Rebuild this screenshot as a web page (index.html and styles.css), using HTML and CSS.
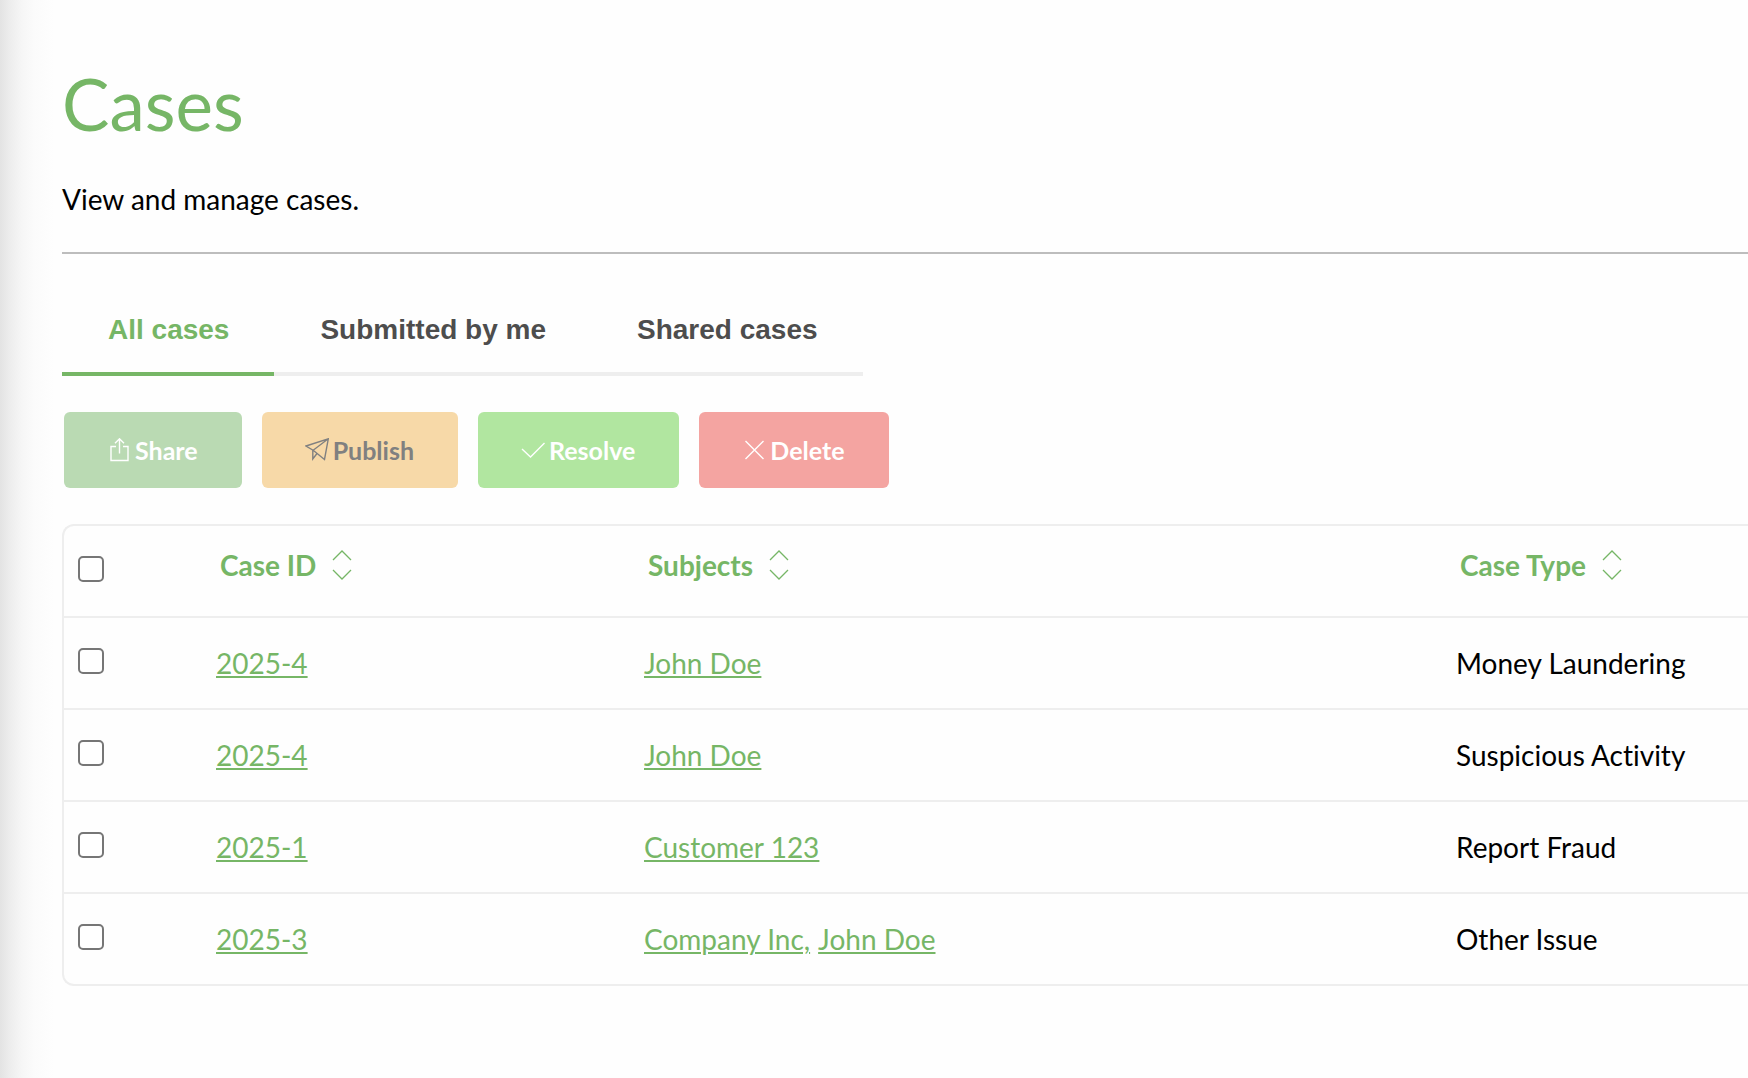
FILE: index.html
```html
<!DOCTYPE html>
<html lang="en">
<head>
<meta charset="utf-8">
<meta name="viewport" content="width=device-width, initial-scale=1">
<title>Cases</title>
<link rel="stylesheet" href="styles.css">
</head>
<body>
<svg class="sprite" aria-hidden="true">
  <symbol id="sort" viewBox="0 0 20 30"><path d="M1 10 10 1l9 9M1 20l9 9 9-9"/></symbol>
</svg>
<main class="page">
  <header class="page-header">
    <h1 class="title">Cases</h1>
    <p class="lead">View and manage cases.</p>
  </header>

  <nav class="tabs" aria-label="Case lists">
    <a class="tab tab-active" href="#all" aria-current="page">All cases</a>
    <a class="tab" href="#submitted">Submitted by me</a>
    <a class="tab" href="#shared">Shared cases</a>
  </nav>

  <div class="actions">
    <button class="btn btn-share" type="button" disabled>
      <svg class="icon" viewBox="0 0 24 24" aria-hidden="true"><path d="M9 8.500H4V22.500h17V8.500H16M12.500 15.500V1M8 5.300 12.500.8 17 5.300"/></svg>
      Share
    </button>
    <button class="btn btn-publish" type="button" disabled>
      <svg class="icon" viewBox="0 0 24 24" aria-hidden="true"><path d="M1 8 23.300.8 19.500 21.500 8.500 12.500ZM23.300.8 7.800 12.500v8.500l4.200-5.500"/></svg>
      Publish
    </button>
    <button class="btn btn-resolve" type="button" disabled>
      <svg class="icon" viewBox="0 0 24 24" aria-hidden="true"><path d="M1 11l8.500 8L23.500 5"/></svg>
      Resolve
    </button>
    <button class="btn btn-delete" type="button" disabled>
      <svg class="icon" viewBox="0 0 24 24" aria-hidden="true"><path d="M3.500 3l18 18M21.500 3l-18 18"/></svg>
      Delete
    </button>
  </div>

  <div class="table-wrap">
    <table class="cases">
      <colgroup><col class="col-check"><col class="col-id"><col><col class="col-type"></colgroup>
      <thead>
        <tr>
          <th class="check"><input type="checkbox" aria-label="Select all cases"></th>
          <th scope="col"><button class="sort" type="button">Case ID<svg class="sort-icon" aria-hidden="true"><use href="#sort"/></svg></button></th>
          <th scope="col"><button class="sort" type="button">Subjects<svg class="sort-icon" aria-hidden="true"><use href="#sort"/></svg></button></th>
          <th scope="col"><button class="sort" type="button">Case Type<svg class="sort-icon" aria-hidden="true"><use href="#sort"/></svg></button></th>
        </tr>
      </thead>
      <tbody>
        <tr>
          <td class="check"><input type="checkbox" aria-label="Select case 2025-4, Money Laundering"></td>
          <td><a href="#case">2025-4</a></td>
          <td><a href="#subject">John Doe</a></td>
          <td>Money Laundering</td>
        </tr>
        <tr>
          <td class="check"><input type="checkbox" aria-label="Select case 2025-4, Suspicious Activity"></td>
          <td><a href="#case">2025-4</a></td>
          <td><a href="#subject">John Doe</a></td>
          <td>Suspicious Activity</td>
        </tr>
        <tr>
          <td class="check"><input type="checkbox" aria-label="Select case 2025-1"></td>
          <td><a href="#case">2025-1</a></td>
          <td><a href="#subject">Customer 123</a></td>
          <td>Report Fraud</td>
        </tr>
        <tr>
          <td class="check"><input type="checkbox" aria-label="Select case 2025-3"></td>
          <td><a href="#case">2025-3</a></td>
          <td><div class="subjects"><a href="#subject">Company Inc,</a><a href="#subject">John Doe</a></div></td>
          <td>Other Issue</td>
        </tr>
      </tbody>
    </table>
  </div>
</main>
</body>
</html>
```
FILE: styles.css
```css
:root {
  --green: #76b666;
  --line: #eee;
}

* { box-sizing: border-box; }

body {
  margin: 0;
  min-height: 100vh;
  background: linear-gradient(to right, #e3e3e3 0, #ededed 10px, #f6f6f6 22px, #fbfbfb 34px, #fefefe 54px);
  color: #000;
  font: 28px/40px Lato, sans-serif;
  font-variant-ligatures: none;
}

.sprite { display: none; }

.page { padding: 62px 0 62px 62px; }

.page-header {
  padding-bottom: 33px;
  border-bottom: 2px solid #bdbdbd;
}

.title {
  margin: 0;
  color: var(--green);
  font-size: 71px;
  font-weight: 400;
  line-height: 84px;
}

.lead { margin: 33px 0 0; }

.tabs {
  display: flex;
  width: fit-content;
  margin-top: 30px;
  font-family: "Liberation Sans", Arial, sans-serif;
  font-weight: 700;
}

.tab {
  padding: 26px 45px 22px 46px;
  border-bottom: 4px solid var(--line);
  color: #4d4d4d;
  line-height: 40px;
  text-decoration: none;
}

.tab-active {
  border-color: var(--green);
  color: var(--green);
}

.actions {
  display: flex;
  gap: 20px;
  margin: 36px 2px;
}

.btn {
  display: flex;
  align-items: center;
  gap: 4px;
  height: 76px;
  padding: 0 44px 0 43px;
  border: 0;
  border-radius: 6px;
  color: #fff;
  font: 700 25px/32px Lato, sans-serif;
}

.btn-share { background: #badab3; }
.btn-publish { background: #f7d9a8; color: #808080; }
.btn-resolve { background: #b1e6a0; }
.btn-delete { background: #f4a4a1; }

.icon {
  width: 24px;
  height: 24px;
  fill: none;
  stroke: currentColor;
  stroke-width: 1.4;
}

.table-wrap {
  border: 2px solid var(--line);
  border-right: 0;
  border-radius: 12px 0 0 12px;
}

.cases {
  width: 100%;
  table-layout: fixed;
  border-collapse: separate;
  border-spacing: 0;
}

.col-check { width: 136px; }
.col-id { width: 428px; }
.col-type { width: 308px; }

.cases th,
.cases td {
  height: 92px;
  padding: 0 16px;
  border-bottom: 2px solid var(--line);
  text-align: left;
  white-space: nowrap;
}

.cases tbody tr:last-child td {
  height: 90px;
  border-bottom: 0;
}

.cases th { padding: 0 20px 12px; }

.cases th.check,
.cases td.check { padding: 0 14px 4px; }

.cases a {
  color: var(--green);
  text-underline-offset: 2px;
  text-decoration-thickness: 2px;
}

.cases input {
  appearance: none;
  display: block;
  width: 26px;
  height: 26px;
  margin: 0;
  border: 2px solid #767676;
  border-radius: 5px;
  background: #fff;
}

.sort {
  display: flex;
  align-items: center;
  gap: 16px;
  padding: 0;
  border: 0;
  background: none;
  color: var(--green);
  font: inherit;
  font-weight: 700;
}

.sort-icon {
  width: 20px;
  height: 30px;
  fill: none;
  stroke: currentColor;
  stroke-width: 1.3;
}

.subjects { display: flex; gap: 8px; }
```
